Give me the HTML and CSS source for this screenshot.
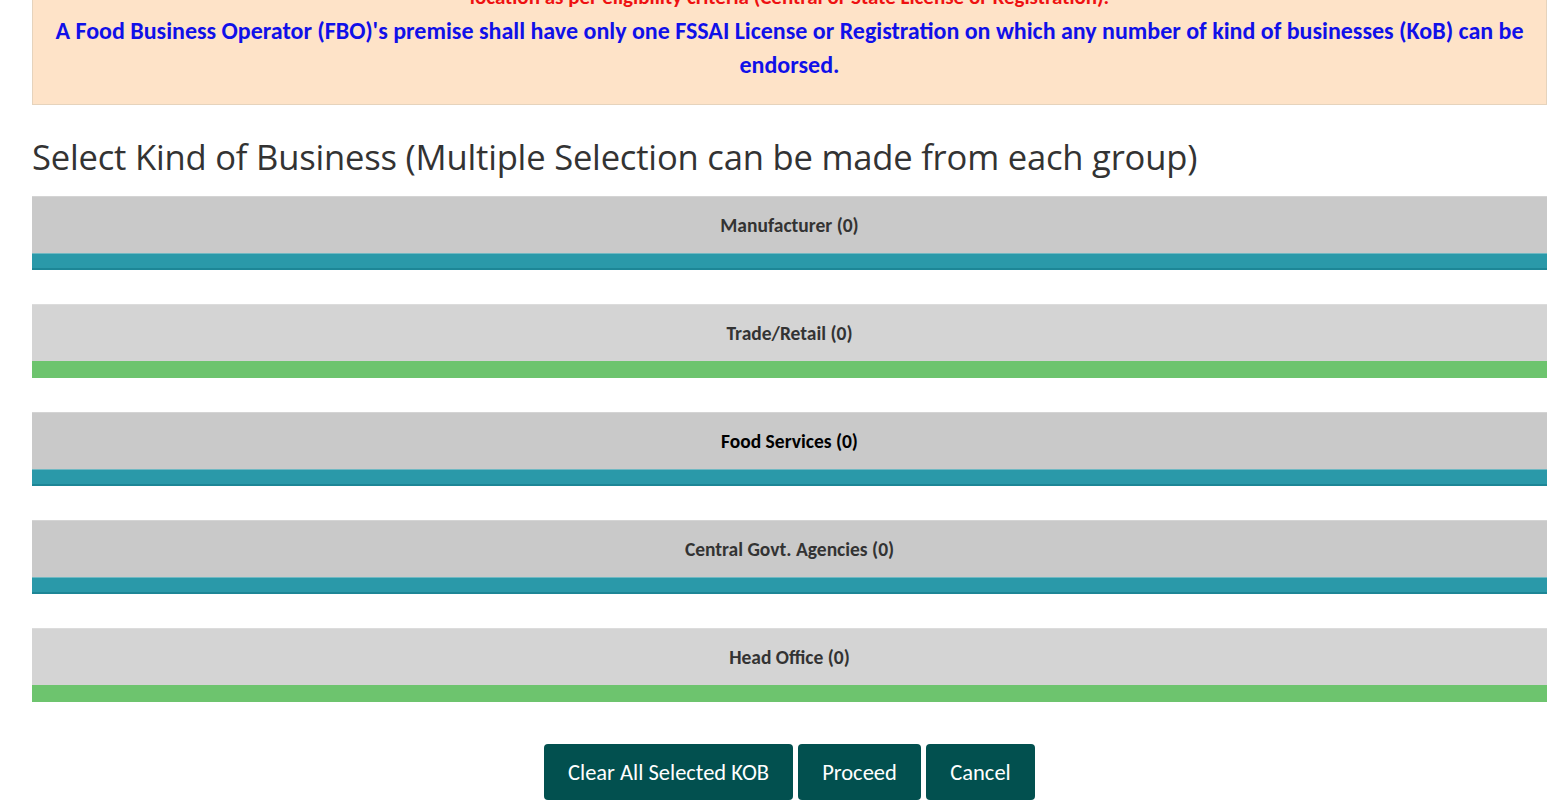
FILE: index.html
```
<!DOCTYPE html>
<html lang="en">
<head>
<meta charset="utf-8">
<title>Select Kind of Business</title>
<link rel="stylesheet" href="styles.css">
</head>
<body>
<div class="page">
  <div class="alert">
    <p class="alert-red">location as per eligibility criteria (Central or State License or Registration).</p>
    <p class="alert-blue">A Food Business Operator (FBO)'s premise shall have only one FSSAI License or Registration on which any number of kind of businesses (KoB) can be endorsed.</p>
  </div>
  <h2 class="title">Select Kind of Business (Multiple Selection can be made from each group)</h2>
  <div class="groups">
    <div class="group teal">
      <div class="group-head dark">Manufacturer (0)</div>
      <div class="group-bar"></div>
    </div>
    <div class="group green">
      <div class="group-head light">Trade/Retail (0)</div>
      <div class="group-bar"></div>
    </div>
    <div class="group teal">
      <div class="group-head dark active">Food Services (0)</div>
      <div class="group-bar"></div>
    </div>
    <div class="group teal">
      <div class="group-head dark">Central Govt. Agencies (0)</div>
      <div class="group-bar"></div>
    </div>
    <div class="group green">
      <div class="group-head light">Head Office (0)</div>
      <div class="group-bar"></div>
    </div>
  </div>
  <div class="actions">
    <button class="btn btn-wide">Clear All Selected KOB</button>
    <button class="btn btn-mid">Proceed</button>
    <button class="btn btn-small">Cancel</button>
  </div>
</div>
</body>
</html>
```
FILE: styles.css
```
html, body {
  margin: 0;
  padding: 0;
  background: #ffffff;
  overflow: hidden;
}
body {
  font-family: Carlito, "Open Sans", "Noto Sans", sans-serif;
  color: #333333;
}
.page {
  width: 1515px;
  margin: 0 0 0 32px;
}
.alert {
  margin-top: -21px;
  background: #fee3c8;
  border: 1px solid #e6d3bc;
  padding: 0 20px 22px;
  text-align: center;
  font-weight: bold;
  font-size: 24px;
  line-height: 34px;
}
.alert p {
  margin: 0;
}
.alert-red {
  color: #ee1111;
  font-size: 21px;
}
.alert-blue {
  color: #1010e8;
}
.title {
  font-family: "Open Sans", "Noto Sans", sans-serif;
  font-weight: 400;
  font-size: 34.6px;
  color: #333333;
  margin: 26px 0 0;
  line-height: 52px;
  height: 65px;
  letter-spacing: -0.2px;
}
.groups {
  display: flex;
  flex-direction: column;
  gap: 34px;
}
.group-head {
  height: 57px;
  display: flex;
  align-items: center;
  justify-content: center;
  font-weight: bold;
  font-size: 19.5px;
  color: #333333;
  border-top: 1px solid #d4d4d4;
  box-sizing: border-box;
}
.group-head.dark {
  background: #c9c9c9;
}
.group-head.light {
  background: #d4d4d4;
  border-top-color: #dcdcdc;
}
.group-head.active {
  color: #000000;
}
.group-bar {
  height: 17px;
  box-sizing: border-box;
}
.teal .group-bar {
  background: #2a99a9;
  border-top: 1px solid #6fb8c2;
  border-bottom: 2px solid #1d8696;
}
.green .group-bar {
  background: #6dc46e;
}
.actions {
  display: flex;
  justify-content: center;
  gap: 5px;
  margin-top: 42px;
}
.btn {
  height: 56px;
  background: #02504f;
  color: #ffffff;
  border: none;
  border-radius: 4px;
  font-family: Carlito, "Open Sans", "Noto Sans", sans-serif;
  font-size: 22.5px;
  padding: 0;
  cursor: pointer;
}
.btn-wide {
  width: 249px;
}
.btn-mid {
  width: 123px;
}
.btn-small {
  width: 109px;
}
```
